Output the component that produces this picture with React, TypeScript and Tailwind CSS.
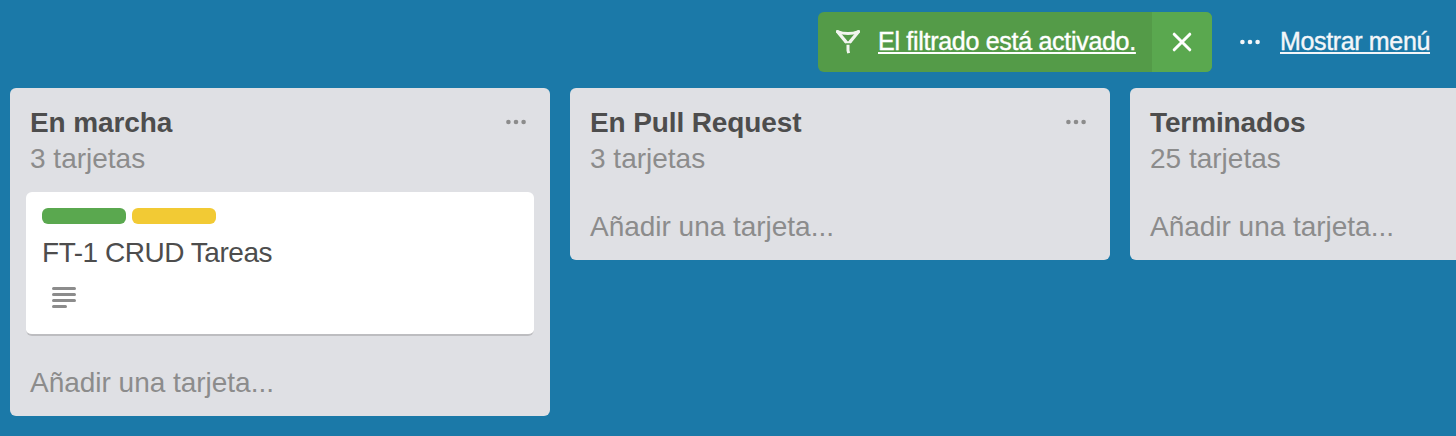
type Card = { title: string };
type List = { name: string; count: string; cards: Card[] };

const lists: List[] = [
  { name: "En marcha", count: "3 tarjetas", cards: [{ title: "FT-1 CRUD Tareas" }] },
  { name: "En Pull Request", count: "3 tarjetas", cards: [] },
  { name: "Terminados", count: "25 tarjetas", cards: [] },
];

function Dots({ className }: { className: string }) {
  return (
    <svg className={className} width="20" height="6" viewBox="0 0 20 6" fill="currentColor">
      <circle cx="2.4" cy="3" r="2.3" />
      <circle cx="10" cy="3" r="2.3" />
      <circle cx="17.6" cy="3" r="2.3" />
    </svg>
  );
}

function FilterIcon() {
  return (
    <svg className="block" width="26" height="26" viewBox="0 0 26 26" fill="none" stroke="#f2f5ef">
      <path d="M2.6 2.8 L10.8 12.6 M23.4 2.8 L15.2 12.6" strokeWidth="3.2" strokeLinecap="round" />
      <path d="M2.4 2.6 Q13 6.6 23.6 2.6" strokeWidth="3" strokeLinecap="round" />
      <path d="M10.6 13.2 H15.4" strokeWidth="2" strokeLinecap="round" />
      <path d="M13 15.8 V21.6 L13.7 24.2" strokeWidth="3" />
    </svg>
  );
}

function CardView({ title }: Card) {
  return (
    <div className="mx-4 mt-[15px] h-[144px] rounded-md border-b-2 border-[#bdbdc0] bg-white px-4 pt-4">
      <div className="flex gap-1.5">
        <span className="h-4 w-[84px] rounded-md bg-[#5aa84f]" />
        <span className="h-4 w-[84px] rounded-md bg-[#f2ca34]" />
      </div>
      <p className="mt-[11px] text-[28px] leading-9 tracking-[-0.47px] text-[#4d4d4d]">{title}</p>
      <svg className="ml-2.5 mt-4 block" width="24" height="22" viewBox="0 0 24 22" fill="#8c8c8c">
        <rect y="0" width="24" height="3" rx="1.5" />
        <rect y="6" width="24" height="3" rx="1.5" />
        <rect y="12" width="24" height="3" rx="1.5" />
        <rect y="18" width="15" height="3" rx="1.5" />
      </svg>
    </div>
  );
}

function ListView({ name, count, cards }: List) {
  return (
    <section className="w-[540px] shrink-0 rounded-md bg-[#dfe0e4] pb-[15px]">
      <header className="flex items-start justify-between pl-5 pr-6 pt-[17px]">
        <div>
          <h2 className="text-[28px] font-bold leading-9 tracking-[-0.12px] text-[#4d4d4d]">{name}</h2>
          <p className="text-[28px] leading-9 text-[#8c8c8c]">{count}</p>
        </div>
        <Dots className="mt-[13.5px] text-[#8c8c8c]" />
      </header>
      {cards.map((card) => (
        <CardView key={card.title} title={card.title} />
      ))}
      <div
        className={`${cards.length > 0 ? "mt-[29px]" : "mt-8"} pl-5 text-[28px] leading-9 tracking-[-0.02px] text-[#8c8c8c]`}
      >
        Añadir una tarjeta...
      </div>
    </section>
  );
}

export default function App() {
  return (
    <div className="h-[436px] overflow-hidden bg-[#1b79a8] font-['Liberation_Sans',Arial,sans-serif]">
      <div className="flex h-[88px] items-start justify-end pr-[26px] pt-3">
        <div className="flex h-[60px] w-[394px] overflow-hidden rounded-md bg-[#549b48] text-white">
          <div className="flex w-[334px] items-center">
            <div className="ml-[17px] w-[43px] pb-px">
              <FilterIcon />
            </div>
            <a className="whitespace-nowrap pb-0.5 text-[25px] leading-9 tracking-[-0.29px] underline decoration-2 underline-offset-2 [-webkit-text-stroke:0.4px_white]">
              El filtrado está activado.
            </a>
          </div>
          <div className="flex w-[60px] items-center justify-center bg-[#5aa84f]">
            <svg width="20" height="20" viewBox="0 0 20 20" stroke="white" strokeWidth="3" strokeLinecap="round">
              <path d="M2.2 2.2 L17.8 17.8 M17.8 2.2 L2.2 17.8" />
            </svg>
          </div>
        </div>
        <div className="flex h-[60px] items-center">
          <Dots className="ml-7 mr-5 text-[#f3f6f9]" />
          <a className="w-[150px] whitespace-nowrap pb-0.5 text-[25px] leading-9 tracking-[-0.35px] text-[#f3f6f9] underline decoration-2 underline-offset-2 [-webkit-text-stroke:0.4px_#f3f6f9]">
            Mostrar menú
          </a>
        </div>
      </div>
      <main className="flex items-start gap-5 pl-2.5">
        {lists.map((list) => (
          <ListView key={list.name} {...list} />
        ))}
      </main>
    </div>
  );
}
